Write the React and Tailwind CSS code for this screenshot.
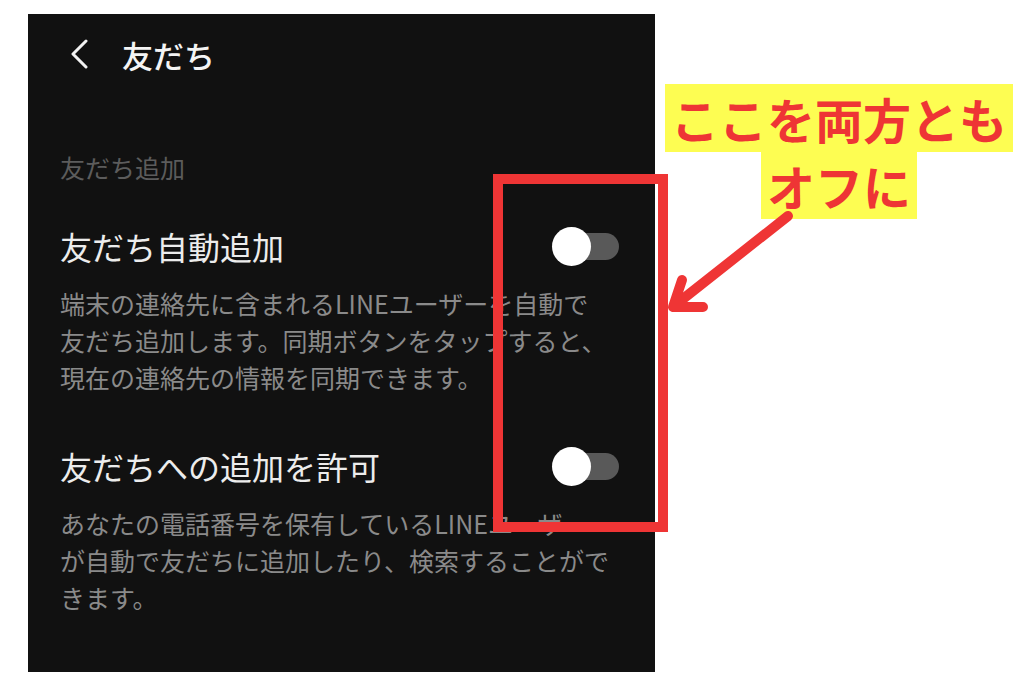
import { useState } from 'react';

const jp = { fontFamily: '"Noto Sans CJK JP", "Noto Sans", sans-serif' };

function Toggle({ on, onChange }) {
  return (
    <button
      type="button"
      onClick={() => onChange(!on)}
      className="relative w-[60px] h-[27px] rounded-full bg-[#595959] shrink-0"
    >
      <span
        className={`absolute top-[-6px] w-[39px] h-[39px] rounded-full bg-white ${on ? 'left-[27px]' : 'left-[-7px]'}`}
      />
    </button>
  );
}

function SettingRow({ title, lines, on, onChange }) {
  return (
    <div>
      <div className="flex items-center justify-between h-[44px]">
        <span className="text-[32px] leading-[44px] text-[#ececec]">{title}</span>
        <Toggle on={on} onChange={onChange} />
      </div>
      <p className="mt-[17px] text-[25px] leading-[37px] text-[#8a8a8a] whitespace-nowrap">
        {lines.map((l, i) => (
          <span key={i} className="block">{l}</span>
        ))}
      </p>
    </div>
  );
}

export default function App() {
  const [autoAdd, setAutoAdd] = useState(false);
  const [allowAdd, setAllowAdd] = useState(false);

  return (
    <div className="relative w-[1024px] h-[683px] bg-white overflow-hidden" style={jp}>
      {/* settings screen */}
      <div className="ml-[28px] mt-[14px] w-[627px] h-[658px] bg-[#111111] pl-[32px] pr-[36px]">
        <div className="flex items-center h-[80px] pl-[10px] gap-[33px]">
          <svg width="19" height="30" viewBox="0 0 19 30" fill="none">
            <path d="M16 2 L3 15 L16 28" stroke="#f2f2f2" strokeWidth="3" strokeLinecap="round" strokeLinejoin="round" />
          </svg>
          <span className="text-[31px] font-medium text-[#f4f4f4] leading-none">友だち</span>
        </div>

        <div className="mt-[55px] text-[25px] leading-[36px] text-[#5c5c5c]">友だち追加</div>

        <div className="mt-[39px]">
          <SettingRow
            title="友だち自動追加"
            on={autoAdd}
            onChange={setAutoAdd}
            lines={[
              '端末の連絡先に含まれるLINEユーザーを自動で',
              '友だち追加します。同期ボタンをタップすると、',
              '現在の連絡先の情報を同期できます。',
            ]}
          />
        </div>

        <div className="mt-[48px]">
          <SettingRow
            title="友だちへの追加を許可"
            on={allowAdd}
            onChange={setAllowAdd}
            lines={[
              'あなたの電話番号を保有しているLINEユーザー',
              'が自動で友だちに追加したり、検索することがで',
              'きます。',
            ]}
          />
        </div>
      </div>

      {/* highlight frame around the toggles */}
      <div className="absolute left-[493px] top-[174px] w-[175px] h-[358px] border-[10px] border-[#ef3535]" />

      {/* callout */}
      <div className="absolute left-[665px] top-[84px] flex flex-col items-center">
        <span className="bg-[#fdfd52] px-[6px] text-[48px] leading-[68px] font-bold text-[#ee3535] whitespace-nowrap">
          ここを両方とも
        </span>
        <span className="bg-[#fdfd52] px-[6px] text-[48px] leading-[67px] font-bold text-[#ee3535] whitespace-nowrap">
          オフに
        </span>
      </div>

      <svg className="absolute left-[660px] top-[200px]" width="150" height="125" viewBox="0 0 150 125" fill="none">
        <g stroke="#ef3535" strokeWidth="10" strokeLinecap="round" strokeLinejoin="round">
          <path d="M128 16 L14 106" />
          <path d="M22 80 L13 107 L43 107" />
        </g>
      </svg>
    </div>
  );
}
